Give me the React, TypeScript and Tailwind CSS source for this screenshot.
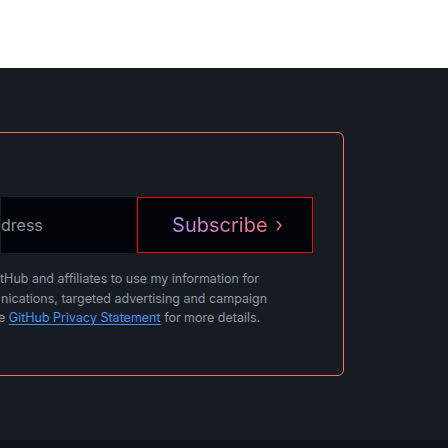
export default function App() {
  return (
    <div className="w-[448px] h-[448px] overflow-hidden bg-[#0d1117] font-['Inter','Noto_Sans',sans-serif]">
      {/* Top white strip */}
      <div className="h-[68px] bg-white" />

      {/* Newsletter section */}
      <div className="h-[372px] bg-[#171b22] pt-16 overflow-hidden">
        <div className="ml-[-24px] w-[368px] h-[244px] rounded-md border border-[#f47067] pt-16 pr-[30px]">
          <div className="flex h-[56px] pl-6">
            <div className="flex-1 flex items-center bg-[#010409] text-[16px] text-[#8b949e] overflow-hidden whitespace-nowrap">
              dress
            </div>
            <button className="w-[176px] h-[56px] flex items-center justify-center border border-[#ff0000] bg-[#010409] text-[20px] leading-none">
              <span className="bg-gradient-to-r from-[#b48ef0] via-[#e07ab9] to-[#f4705d] bg-clip-text text-transparent pl-[5px]">
                Subscribe <span className="ml-[2px]">›</span>
              </span>
            </button>
          </div>

          <div className="pl-6 mt-[16px] text-[12.5px] leading-[19.5px] text-[#9198a1] whitespace-nowrap">
            <p className="ml-[-1px]">tHub and affiliates to use my information for</p>
            <p>nications, targeted advertising and campaign</p>
            <p className="ml-[-3px]">
              e{" "}
              <a href="#" className="text-[#4493f8] underline underline-offset-2">
                GitHub Privacy Statement
              </a>{" "}
              for more details.
            </p>
          </div>
        </div>
      </div>
    </div>
  )
}
